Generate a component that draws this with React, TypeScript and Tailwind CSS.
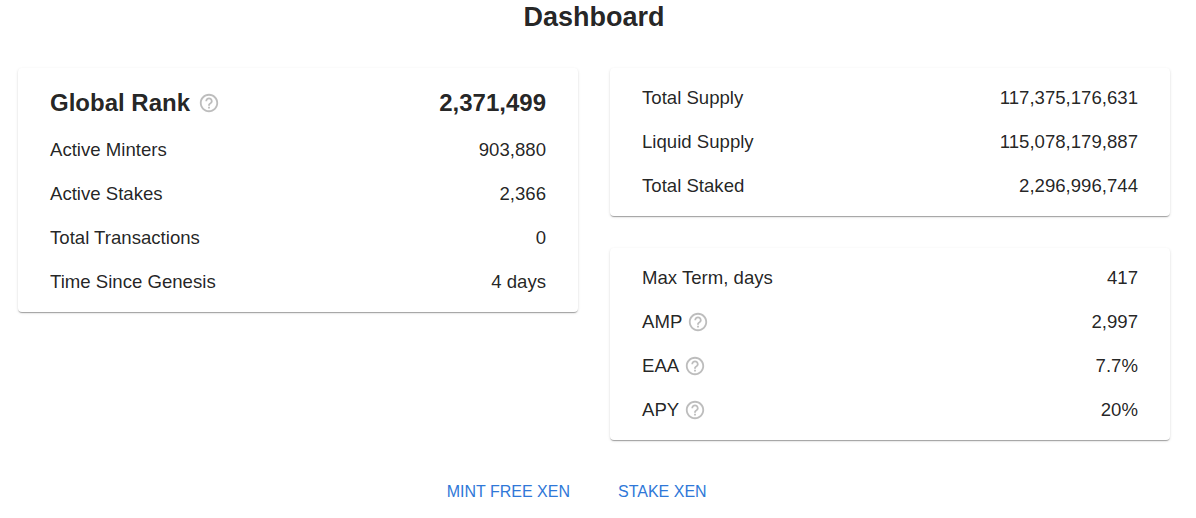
import React from "react";

function HelpIcon({ className = "" }: { className?: string }) {
  return (
    <svg viewBox="0 0 24 24" className={`w-[22px] h-[22px] shrink-0 ${className}`} fill="#bdbdbd">
      <path d="M11 18h2v-2h-2v2zm1-16C6.48 2 2 6.48 2 12s4.48 10 10 10 10-4.48 10-10S17.52 2 12 2zm0 18c-4.41 0-8-3.59-8-8s3.59-8 8-8 8 3.59 8 8-3.59 8-8 8zm0-14c-2.21 0-4 1.79-4 4h2c0-1.1.9-2 2-2s2 .9 2 2c0 2-3 1.75-3 5h2c0-2.25 3-2.5 3-5 0-2.21-1.79-4-4-4z" />
    </svg>
  );
}

function Row({ label, value, help }: { label: string; value: string; help?: boolean }) {
  return (
    <div className="flex h-[44px] items-center justify-between px-8 text-[18.6px]">
      <div className="flex items-center">
        <span>{label}</span>
        {help && <HelpIcon className="ml-[5px]" />}
      </div>
      <span>{value}</span>
    </div>
  );
}

const cardCls =
  "bg-white rounded-[4px] shadow-[0px_2px_1px_-1px_rgba(0,0,0,0.2),0px_1px_1px_0px_rgba(0,0,0,0.14),0px_1px_3px_0px_rgba(0,0,0,0.12)]";

export default function App() {
  return (
    <div
      className="w-[1196px] h-[518px] bg-white text-[rgba(0,0,0,0.87)] pl-[18px] pr-[26px]"
      style={{ fontFamily: '"Liberation Sans", Arial, sans-serif' }}
    >
      <h1 className="text-center text-[27px] font-bold leading-[35px]">Dashboard</h1>
      <div className="mt-[33px] grid grid-cols-2 gap-8 items-start">
        <div className={`${cardCls} pt-[9px] pb-[8px]`}>
          <div className="flex h-[51px] items-center justify-between px-8 text-[24px] font-bold">
            <div className="flex items-center">
              <span>Global Rank</span>
              <HelpIcon className="ml-2" />
            </div>
            <span>2,371,499</span>
          </div>
          <Row label="Active Minters" value="903,880" />
          <Row label="Active Stakes" value="2,366" />
          <Row label="Total Transactions" value="0" />
          <Row label="Time Since Genesis" value="4 days" />
        </div>
        <div className="flex flex-col gap-8">
          <div className={`${cardCls} pt-[8px] pb-[8px]`}>
            <Row label="Total Supply" value="117,375,176,631" />
            <Row label="Liquid Supply" value="115,078,179,887" />
            <Row label="Total Staked" value="2,296,996,744" />
          </div>
          <div className={`${cardCls} pt-[8px] pb-[8px]`}>
            <Row label="Max Term, days" value="417" />
            <Row label="AMP" value="2,997" help />
            <Row label="EAA" value="7.7%" help />
            <Row label="APY" value="20%" help />
          </div>
        </div>
      </div>
      <div className="mt-[34px] grid grid-cols-2 gap-8">
        <div className="flex justify-end">
          <button className="h-9 px-2 text-[16px] uppercase text-[#2f78d8] rounded-[4px]">Mint Free XEN</button>
        </div>
        <div className="flex justify-start">
          <button className="h-9 px-2 text-[16px] uppercase text-[#2f78d8] rounded-[4px]">Stake XEN</button>
        </div>
      </div>
    </div>
  );
}
